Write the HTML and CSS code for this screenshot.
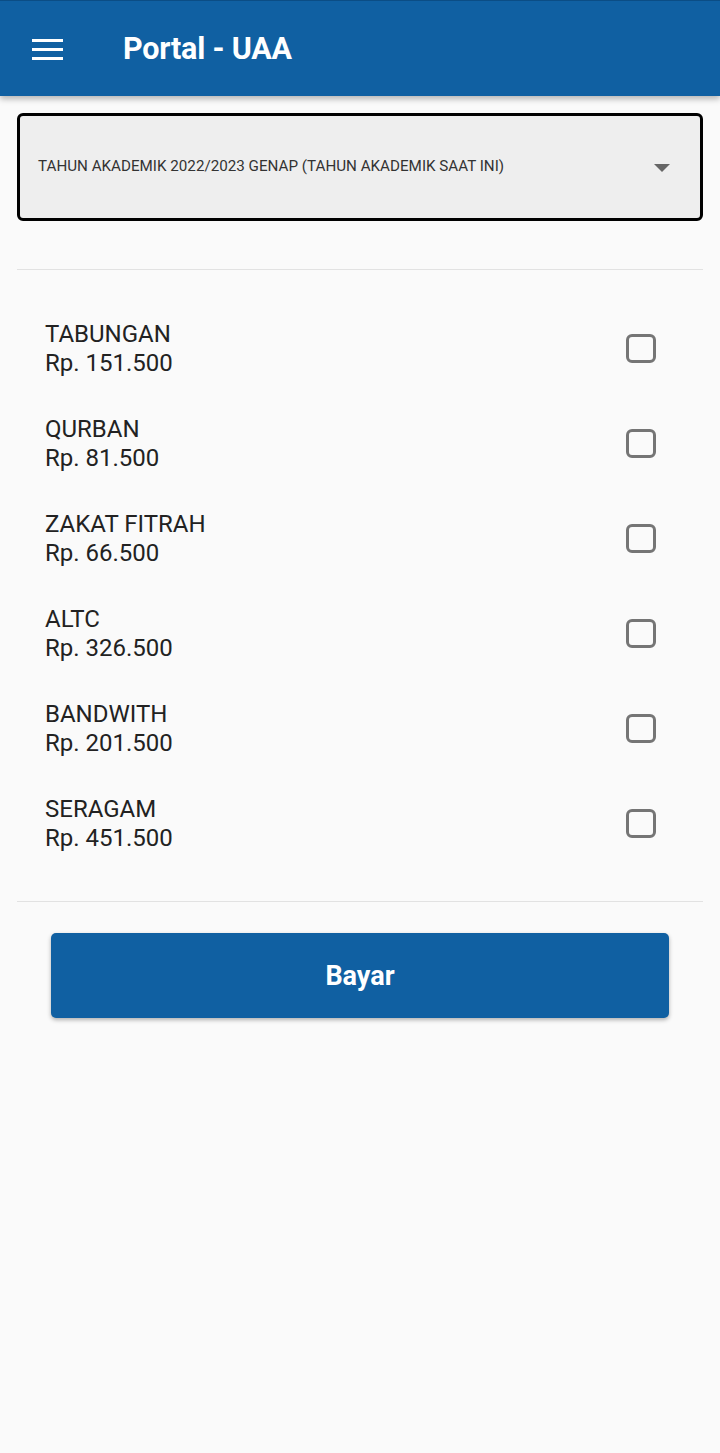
FILE: index.html
```html
<!DOCTYPE html>
<html>
<head>
<meta charset="utf-8">
<link rel="stylesheet" href="styles.css">
</head>
<body>
<header class="appbar">
  <svg class="menu" width="31" height="21" viewBox="0 0 31 21"><rect x="0" y="0" width="31" height="3" fill="#fff"/><rect x="0" y="9" width="31" height="3" fill="#fff"/><rect x="0" y="18" width="31" height="3" fill="#fff"/></svg>
  <h1 class="title">Portal - UAA</h1>
</header>
<main class="content">
  <div class="select">
    <span class="select-text">TAHUN AKADEMIK 2022/2023 GENAP (TAHUN AKADEMIK SAAT INI)</span>
    <svg class="caret" width="16" height="8" viewBox="0 0 16 8"><path d="M0 0h16L8 8z" fill="#666"/></svg>
  </div>
  <div class="list">
    <div class="item"><div class="info"><div class="name">TABUNGAN</div><div class="price">Rp. 151.500</div></div><span class="check"></span></div>
    <div class="item"><div class="info"><div class="name">QURBAN</div><div class="price">Rp. 81.500</div></div><span class="check"></span></div>
    <div class="item"><div class="info"><div class="name">ZAKAT FITRAH</div><div class="price">Rp. 66.500</div></div><span class="check"></span></div>
    <div class="item"><div class="info"><div class="name">ALTC</div><div class="price">Rp. 326.500</div></div><span class="check"></span></div>
    <div class="item"><div class="info"><div class="name">BANDWITH</div><div class="price">Rp. 201.500</div></div><span class="check"></span></div>
    <div class="item"><div class="info"><div class="name">SERAGAM</div><div class="price">Rp. 451.500</div></div><span class="check"></span></div>
  </div>
  <button class="pay">Bayar</button>
</main>
</body>
</html>
```

FILE: styles.css
```css
* { box-sizing: border-box; }
html, body { margin: 0; padding: 0; }
body {
  background: #fafafa;
  font-family: Roboto, "Liberation Sans", sans-serif;
  width: 720px;
  min-height: 1453px;
}
.appbar {
  height: 96px;
  background: #1060a2;
  border-top: 1px solid #0b4d85;
  display: flex;
  align-items: center;
  padding-left: 32px;
  box-shadow: 0 3px 6px rgba(0,0,0,0.28);
  position: relative;
  z-index: 1;
}
.menu { display: block; margin-top: 1px; }
.title {
  margin: 0 0 0 60px;
  color: #fff;
  font-size: 30.5px;
  font-weight: 700;
  letter-spacing: -0.2px;
}
.content { padding: 17px 17px 0 17px; }
.select {
  height: 108px;
  border: 3px solid #000;
  border-radius: 6px;
  background: #eeeeee;
  display: flex;
  align-items: center;
  justify-content: space-between;
  padding: 0 30px 0 18px;
}
.select-text {
  font-size: 15.2px;
  color: #333;
  white-space: nowrap;
  margin-top: -2px;
}
.caret { display: block; margin-top: 2px; }
.list {
  margin-top: 48px;
  border-top: 1px solid #e2e2e2;
  border-bottom: 1px solid #e2e2e2;
  padding: 31px 0 30px 0;
}
.item {
  height: 95px;
  display: flex;
  align-items: center;
  justify-content: space-between;
  padding: 0 47px 0 28px;
}
.info { color: #222; font-size: 24px; line-height: 29px; }
.check {
  width: 30px;
  height: 29px;
  border: 3px solid #757575;
  border-radius: 6px;
  display: block;
}
.pay {
  display: block;
  margin: 31px 0 0 34px;
  width: 618px;
  height: 85px;
  border: none;
  border-radius: 5px;
  background: #1060a2;
  color: #fff;
  font-family: Roboto, "Liberation Sans", sans-serif;
  font-size: 27px;
  font-weight: 700;
  box-shadow: 0 2px 4px rgba(0,0,0,0.3);
}
```
